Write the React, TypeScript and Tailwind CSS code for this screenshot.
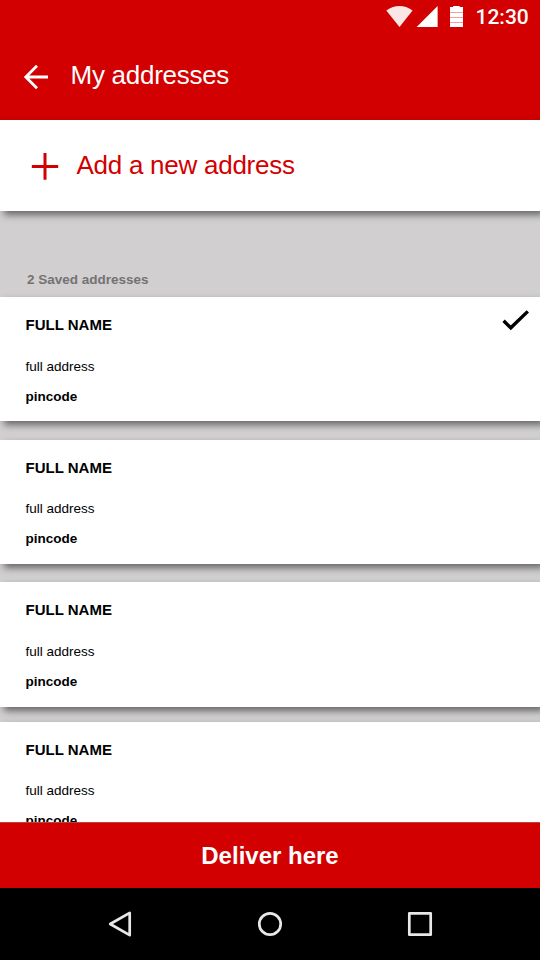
import React from 'react';

type AddressProps = {
  selected?: boolean;
  className: string;
  detailClassName?: string;
};

function AddressCard({ selected = false, className, detailClassName = 'mt-[25px]' }: AddressProps) {
  return (
    <article
      className={`flex shrink-0 items-start justify-between bg-white pl-[25.5px] shadow-[4px_4px_7px_rgba(0,0,0,0.5)] ${className}`}
    >
      <div className="flex flex-col whitespace-nowrap text-black">
        <h2 className="mt-[19px] text-[15px] leading-[18px] font-bold">FULL NAME</h2>
        <p className={`text-[13.5px] leading-[16px] ${detailClassName}`}>full address</p>
        <p className="mt-[14px] text-[13.5px] leading-[16px] font-bold">pincode</p>
      </div>
      {selected && (
        <svg className="mt-[12px] mr-[10px] h-[24px] w-[30px]" viewBox="0 0 30 24" fill="none">
          <path d="M3.6 11.8 10.8 18.8 27.8 2.4" stroke="#000" strokeWidth="3.4" />
        </svg>
      )}
    </article>
  );
}

function StatusBar() {
  return (
    <div className="flex h-8 items-start text-white">
      <svg className="ml-[386px] h-8 w-[80px]" viewBox="386 0 80 32">
        <path d="M386.3 10.4Q399.5 1.6 412.6 10.4L399.5 27Z" fill="#fff" fillOpacity="0.9" />
        <path d="M437.6 6V27H416.6Z" fill="#fff" />
        <path d="M453.2 6h6.5v1h3.3v20h-13v-20h3.2z" fill="#fff" />
        <path d="M450 12.5h13M450 17.5h13M450 22.5h13" stroke="#e77777" strokeWidth="0.7" />
      </svg>
      <span className="ml-[9.5px] mt-[5px] font-['Roboto',sans-serif] text-[21px] leading-[24px] font-medium">12:30</span>
    </div>
  );
}

export default function App() {
  return (
    <div className="flex h-[960px] w-[540px] flex-col overflow-hidden bg-[#d1cfd0] font-['Liberation_Sans',Arial,sans-serif]">
      <header className="h-[120px] shrink-0 bg-linear-to-b from-[#d20000] from-95% to-[#c60000]">
        <StatusBar />
        <div className="flex h-[88px] items-center">
          <svg className="mt-px ml-[23px] h-[26px] w-[26px]" viewBox="0 0 26 26" fill="none" stroke="#fff" strokeWidth="2.8">
            <path d="M25 13H3M14 1.8 2.8 13 14 24.2" />
          </svg>
          <h1 className="-mt-[2px] ml-[21.5px] text-[26px] leading-[30px] tracking-[-0.27px] text-white">My addresses</h1>
        </div>
      </header>

      <main className="flex h-[702px] shrink-0 flex-col overflow-hidden">
        <button className="flex h-[91px] w-full shrink-0 items-center bg-white text-[#d20000] shadow-[4px_4px_7px_rgba(0,0,0,0.5)]">
          <svg className="ml-[31px] h-[28px] w-[28px]" viewBox="0 0 28 28" stroke="#d20000" strokeWidth="3">
            <path d="M.8 14.5H27.2M14 1V27.7" />
          </svg>
          <span className="-mt-[2px] ml-[17.5px] text-[26px] leading-[30px] tracking-[-0.26px]">Add a new address</span>
        </button>

        <p className="mt-[61px] shrink-0 pl-[27px] text-[13.5px] leading-[16px] font-bold text-[#747273]">
          2 Saved addresses
        </p>
        <AddressCard selected className="mt-[9px] h-[124px]" />
        <AddressCard className="mt-[18.5px] h-[124.5px]" detailClassName="mt-[24px]" />
        <AddressCard className="mt-[18px] h-[124.5px]" />
        <AddressCard className="mt-[15px] h-[124px]" detailClassName="mt-[24px]" />
      </main>

      <button className="h-[66px] shrink-0 border-t border-[#bb4141] bg-[#d20000] text-[24px] leading-[28px] font-bold text-white">
        Deliver here
      </button>

      <nav className="flex h-[72px] shrink-0 items-center justify-center bg-black">
        <svg className="h-[28px] w-[328px]" viewBox="106 910 328 28" fill="none" stroke="#e8e8e8" strokeWidth="2.7" strokeLinejoin="round">
          <path d="M129.7 912.8V935.2L110.2 924Z" />
          <circle cx="270" cy="924" r="10.7" />
          <rect x="409.3" y="913.3" width="21.4" height="21.4" />
        </svg>
      </nav>
    </div>
  );
}
